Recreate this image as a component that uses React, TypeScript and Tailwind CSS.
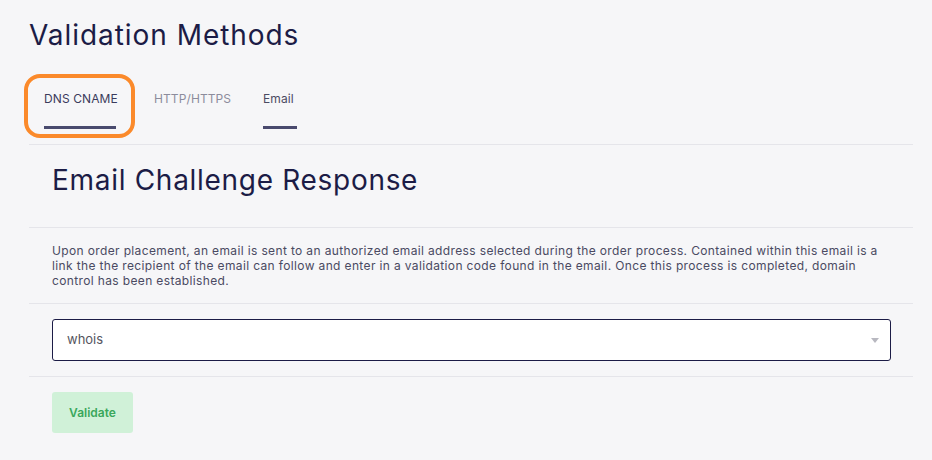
const tabs = [
  { id: "dns", label: "DNS CNAME", width: "w-[72px]", underline: true, color: "text-[#3b3b5c]" },
  { id: "http", label: "HTTP/HTTPS", width: "w-[71px]", underline: false, color: "text-[#8c8c9c]" },
  { id: "email", label: "Email", width: "w-[34px]", underline: true, color: "text-[#4b4b62]" },
];

const App = () => {
  return (
    <div className="min-h-[460px] bg-[#f6f6f8] pl-[29px] pr-[19px] pt-[18px] font-['Inter',sans-serif]">
      <h1 className="text-[28px] leading-[34px] tracking-[0.95px] text-[#1c1c46]">Validation Methods</h1>

      <div className="relative mt-[39px] flex gap-x-[38px] pl-[15px]">
        {tabs.map((t) => (
          <div key={t.id} className={`flex flex-col items-stretch ${t.width}`}>
            <span className={`whitespace-nowrap text-[12px] leading-[16px] tracking-[0.1px] ${t.color}`}>{t.label}</span>
            <span className={`mt-[19px] h-[3px] ${t.underline ? "bg-[#494a6e]" : "bg-transparent"}`} />
          </div>
        ))}
        <div className="pointer-events-none absolute left-[-5px] top-[-17px] h-[64px] w-[111px] rounded-[16px] border-[4px] border-[#fb8a2b]" />
      </div>

      <div className="mt-[15px] border-t border-[#e5e5ea]">
        <div className="px-[23px] pt-[18px] pb-[30px]">
          <h2 className="text-[28px] leading-[34px] tracking-[0.7px] text-[#1c1c46]">Email Challenge Response</h2>
        </div>

        <div className="border-t border-[#e5e5ea] px-[23px] pt-[15px] pb-[15px]">
          <p className="text-[12px] leading-[15px] tracking-[0.36px] text-[#4a4a62]">
            Upon order placement, an email is sent to an authorized email address selected during the order process.
            Contained within this email is a link the the recipient of the email can follow and enter in a validation
            code found in the email. Once this process is completed, domain control has been established.
          </p>
        </div>

        <div className="border-t border-[#e5e5ea] py-[15px] pl-[23px] pr-[22px]">
          <div className="flex h-[42px] items-center justify-between rounded-[3px] border border-[#1c1c46] bg-white pl-[14px] pr-[11px]">
            <span className="text-[13px] text-[#555560]">whois</span>
            <svg width="8" height="5" viewBox="0 0 8 5">
              <path d="M0 0 L8 0 L4 5 Z" fill="#b8b8c0" />
            </svg>
          </div>
        </div>

        <div className="border-t border-[#e5e5ea] px-[23px] pt-[15px] pb-[20px]">
          <button className="h-[41px] w-[81px] rounded-[3px] bg-[#d0f1d8] text-[12px] font-semibold text-[#3aa75c]">
            Validate
          </button>
        </div>
      </div>
    </div>
  );
};

export default App;
